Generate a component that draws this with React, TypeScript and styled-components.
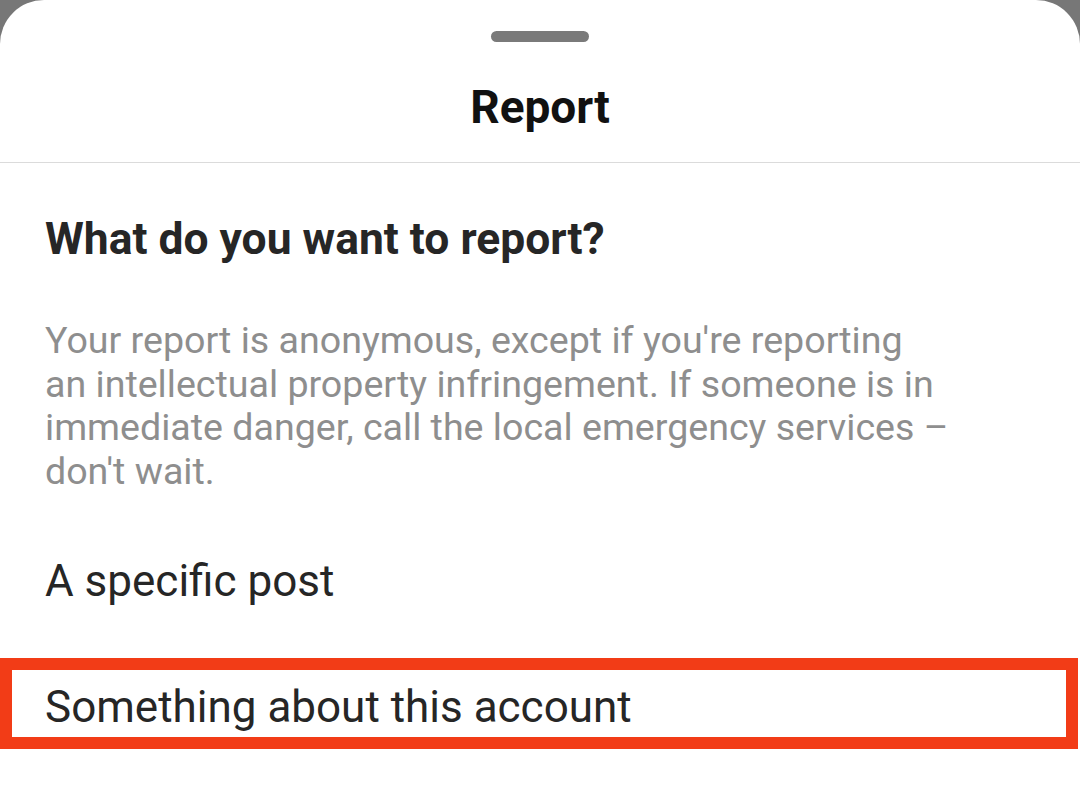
import React from "react";
import styled, {createGlobalStyle} from "styled-components";

const Global = createGlobalStyle`
  html, body {
    margin: 0;
    padding: 0;
    background: #777777;
  }
  body {
    font-family: Roboto, "Noto Sans", "Liberation Sans", sans-serif;
  }
`

const Sheet = styled.div`
  width: 1080px;
  height: 785px;
  background: white;
  border-radius: 44px 44px 0 0;
  overflow: hidden;
  display: flex;
  flex-direction: column;
`

const Header = styled.div`
  display: flex;
  flex-direction: column;
  align-items: center;
  height: 163px;
  border-bottom: 1px solid #dbdbdb;
  box-sizing: border-box;
`

const Handle = styled.div`
  width: 98px;
  height: 11px;
  border-radius: 6px;
  background: #7a7a7a;
  margin-top: 31px;
`

const Title = styled.h1`
  margin: 38px 0 0;
  font-size: 46px;
  line-height: 54px;
  font-weight: 700;
  color: #111;
`

const Body = styled.div`
  padding: 0 45px;
  display: flex;
  flex-direction: column;
`

const Question = styled.h2`
  margin: 50px 0 0;
  font-size: 44.4px;
  line-height: 52px;
  font-weight: 700;
  color: #262626;
`

const Note = styled.p`
  margin: 54px 0 0;
  font-size: 37.6px;
  line-height: 43.6px;
  color: #8e8e8e;
  white-space: nowrap;
`

const Option = styled.div<{$marked?: boolean}>`
  font-size: 44px;
  line-height: 52px;
  color: #262626;
  margin: ${p => p.$marked ? "51px -43px 0 -45px" : "62px 0 0"};
  padding: ${p => p.$marked ? "11px 33px 4px" : "0"};
  border: ${p => p.$marked ? "12px solid #f23c17" : "none"};
`

export default function App() {
    return (
        <>
            <Global/>
            <Sheet>
                <Header>
                    <Handle/>
                    <Title>Report</Title>
                </Header>
                <Body>
                    <Question>What do you want to report?</Question>
                    <Note>
                        Your report is anonymous, except if you're reporting<br/>
                        an intellectual property infringement. If someone is in<br/>
                        immediate danger, call the local emergency services –<br/>
                        don't wait.
                    </Note>
                    <Option>A specific post</Option>
                    <Option $marked>Something about this account</Option>
                </Body>
            </Sheet>
        </>
    );
}
